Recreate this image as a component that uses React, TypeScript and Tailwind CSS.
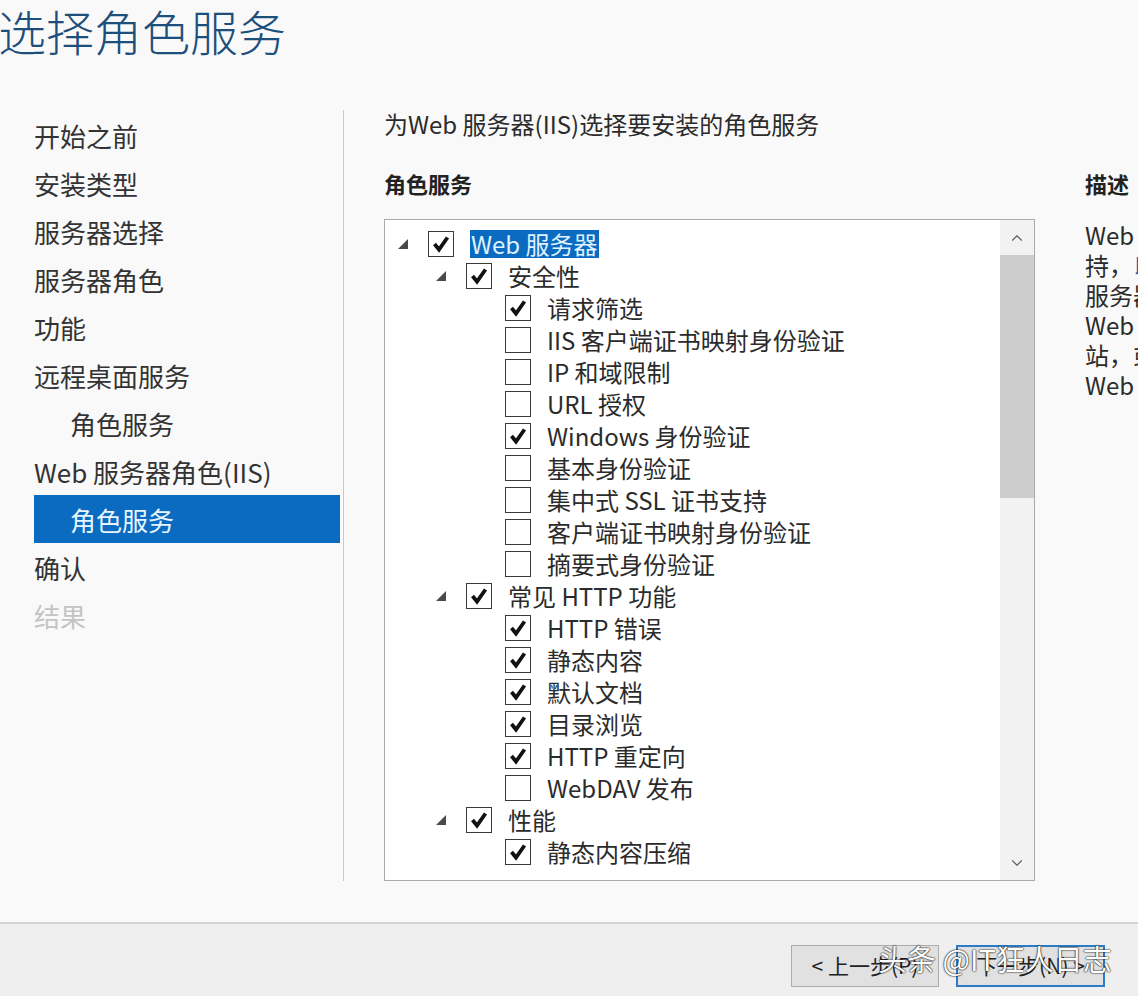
import { ChevronUp, ChevronDown } from 'lucide-react';

const navItems = [
  { label: '开始之前', sub: false },
  { label: '安装类型', sub: false },
  { label: '服务器选择', sub: false },
  { label: '服务器角色', sub: false },
  { label: '功能', sub: false },
  { label: '远程桌面服务', sub: false },
  { label: '角色服务', sub: true },
  { label: 'Web 服务器角色(IIS)', sub: false },
  { label: '角色服务', sub: true, active: true },
  { label: '确认', sub: false },
  { label: '结果', sub: false, disabled: true },
];

const tree = [
  { label: 'Web 服务器', level: 0, checked: true, expand: true, selected: true },
  { label: '安全性', level: 1, checked: true, expand: true },
  { label: '请求筛选', level: 2, checked: true },
  { label: 'IIS 客户端证书映射身份验证', level: 2, checked: false },
  { label: 'IP 和域限制', level: 2, checked: false },
  { label: 'URL 授权', level: 2, checked: false },
  { label: 'Windows 身份验证', level: 2, checked: true },
  { label: '基本身份验证', level: 2, checked: false },
  { label: '集中式 SSL 证书支持', level: 2, checked: false },
  { label: '客户端证书映射身份验证', level: 2, checked: false },
  { label: '摘要式身份验证', level: 2, checked: false },
  { label: '常见 HTTP 功能', level: 1, checked: true, expand: true },
  { label: 'HTTP 错误', level: 2, checked: true },
  { label: '静态内容', level: 2, checked: true },
  { label: '默认文档', level: 2, checked: true },
  { label: '目录浏览', level: 2, checked: true },
  { label: 'HTTP 重定向', level: 2, checked: true },
  { label: 'WebDAV 发布', level: 2, checked: false },
  { label: '性能', level: 1, checked: true, expand: true },
  { label: '静态内容压缩', level: 2, checked: true },
];

const descLines = [
  'Web 服务器提供对 HTML 网站的支',
  '持，以及对 ASP.NET、ASP 和 Web',
  '服务器扩展的可选支持。使用',
  'Web 服务器可以承载内部或外部网',
  '站，或为开发人员提供一个创建基于',
  'Web 的应用程序的环境。',
];

const indent = ['pl-[12px]', 'pl-[50px]', 'pl-[89px]'];

function CheckBox({ checked }: { checked: boolean }) {
  return (
    <div className="flex h-[26px] w-[26px] shrink-0 items-center justify-center border border-[#3a3a3a] bg-white">
      {checked && (
        <svg width="20" height="20" viewBox="0 0 20 20">
          <path d="M3.5 10 L8 15.5 L16.5 3.5" fill="none" stroke="#111" strokeWidth="3.8" strokeLinejoin="miter" />
        </svg>
      )}
    </div>
  );
}

export default function App() {
  return (
    <div className="relative h-[996px] w-[1138px] overflow-hidden bg-[#f9f9f9] font-['Noto_Sans_CJK_SC',sans-serif] text-[#2b2b2b]">
      {/* Header */}
      <div className="h-[110px] pt-[6px]">
        <h1 className="-ml-[2px] text-[48px] leading-[48px] font-light text-[#1d4f7c]">选择角色服务</h1>
      </div>

      <div className="flex h-[812px]">
        {/* Left nav */}
        <div className="h-[771px] w-[344px] shrink-0 border-r border-[#c9c9c9] pl-[34px] pt-[1px]">
          {navItems.map((item, i) => (
            <div
              key={i}
              className={`flex h-[48px] w-[306px] items-center text-[26px] ${item.sub ? 'pl-[36px]' : ''} ${
                item.active ? 'bg-[#0b6bc0] text-[#e6f5ff]' : item.disabled ? 'text-[#c4c4c4]' : 'text-[#333]'
              }`}
            >
              {item.label}
            </div>
          ))}
        </div>

        {/* Main */}
        <div className="ml-[40px] w-[651px] shrink-0">
          <p className="text-[24px] leading-[28px] text-[#2b2b2b]">为Web 服务器(IIS)选择要安装的角色服务</p>
          <h2 className="mt-[31px] text-[22px] leading-[28px] font-bold text-[#222]">角色服务</h2>
          <div className="mt-[22px] flex h-[662px] border border-[#a9a9a9] bg-white">
            <div className="flex-1 overflow-hidden pt-[8px]">
              {tree.map((row, i) => (
                <div key={i} className={`flex h-[32px] items-center ${indent[row.level]}`}>
                  <div className="flex w-[31px] shrink-0 items-center">
                    {row.expand && (
                      <svg width="12" height="12" viewBox="0 0 12 12">
                        <polygon points="11,1 11,11 1,11" fill="#4a4a4a" />
                      </svg>
                    )}
                  </div>
                  <CheckBox checked={row.checked} />
                  <span
                    className={`ml-[16px] whitespace-nowrap text-[24px] leading-[28px] ${
                      row.selected ? 'bg-[#0b6bc0] px-[1px] text-[#dff3ff]' : 'text-[#2b2b2b]'
                    }`}
                  >
                    {row.label}
                  </span>
                </div>
              ))}
            </div>
            {/* Scrollbar */}
            <div className="flex w-[34px] shrink-0 flex-col bg-[#f2f2f2]">
              <div className="flex h-[35px] items-center justify-center text-[#606060]">
                <ChevronUp size={18} strokeWidth={1.5} />
              </div>
              <div className="h-[243px] bg-[#cdcdcd]" />
              <div className="flex-1" />
              <div className="flex h-[35px] items-center justify-center text-[#606060]">
                <ChevronDown size={18} strokeWidth={1.5} />
              </div>
            </div>
          </div>
        </div>

        {/* Description */}
        <div className="ml-[50px] w-[400px] shrink-0 pt-[59px]">
          <h2 className="text-[22px] leading-[28px] font-bold text-[#222]">描述</h2>
          <div className="mt-[23px] text-[24px] leading-[30px] text-[#2b2b2b]">
            {descLines.map((line, i) => (
              <p key={i} className="whitespace-nowrap">
                {i === 1 ? (
                  <>
                    持，<span className="text-[#1a5fb4]">以</span>及对 ASP.NET、ASP 和 Web
                  </>
                ) : (
                  line
                )}
              </p>
            ))}
          </div>
        </div>
      </div>

      {/* Footer */}
      <div className="flex h-[74px] justify-end border-t-2 border-[#d4d4d4] bg-[#efefef] pt-[21px] pr-[33px]">
        <button className="h-[42px] w-[148px] border border-[#adadad] bg-[#e1e1e1] text-[21px] text-[#222]">
          &lt; 上一步(P)
        </button>
        <button className="ml-[17px] h-[42px] w-[149px] border-2 border-[#2a7cc7] bg-[#e1e1e1] text-[21px] text-[#222]">
          下一步(N) &gt;
        </button>
      </div>

      {/* Watermark */}
      <div className="absolute left-[878px] top-[938px] text-[29px] leading-[40px] text-white [text-shadow:0_0_2px_#000,0_0_1px_#000]">
        头条 @IT狂人日志
      </div>
    </div>
  );
}
